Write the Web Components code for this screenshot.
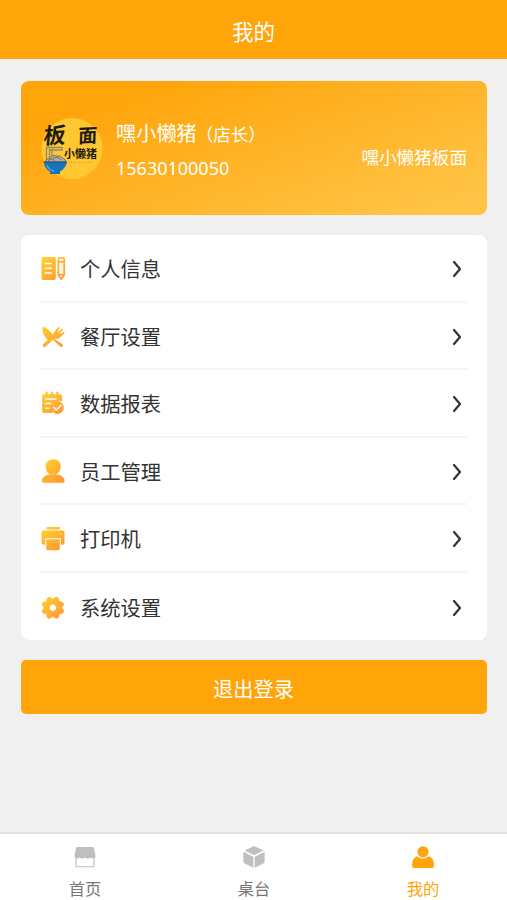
<!DOCTYPE html>
<html lang="zh-CN">
<head>
  <meta charset="UTF-8">
  <meta name="viewport" content="width=device-width, initial-scale=1.0">
  <title>我的</title>
  <style>
    body {
      margin: 0;
      min-height: 100vh;
      display: flex;
      flex-direction: column;
      background: #f0f0f0;
      color: #333;
      font-family: "Noto Sans", "Noto Sans CJK SC", sans-serif;
    }
    main {
      flex: 1;
      display: flex;
      flex-direction: column;
      gap: 20px;
      padding: 22px 20px 0 21px;
    }
  </style>
</head>
<body>
  <page-header>我的</page-header>
  <main>
    <profile-card>
      <shop-logo slot="avatar"></shop-logo>
      <span slot="name">嘿小懒猪</span>
      <span slot="role">（店长）</span>
      <span slot="phone">15630100050</span>
      <span slot="shop">嘿小懒猪板面</span>
    </profile-card>
    <menu-list>
      <menu-item icon="profile">个人信息</menu-item>
      <menu-item icon="dining">餐厅设置</menu-item>
      <menu-item icon="report">数据报表</menu-item>
      <menu-item icon="staff">员工管理</menu-item>
      <menu-item icon="printer">打印机</menu-item>
      <menu-item icon="gear">系统设置</menu-item>
    </menu-list>
    <logout-button>退出登录</logout-button>
  </main>
  <tab-bar>
    <tab-item icon="home">首页</tab-item>
    <tab-item icon="table">桌台</tab-item>
    <tab-item icon="user" active>我的</tab-item>
  </tab-bar>

  <script>
    const icons = {
      profile: `
        <path fill="url(#g)" d="M2.700 0H13q1.800 0 1.800 1.800v19.400q0 1.800-1.800 1.800H2.300Q.5 23 .5 21.200v-3l.5-.9-.5-.9v-3.200l.5-.9-.5-.9V2q0-2 2.200-2z"/>
        <path stroke="#fff" stroke-width="1.500" stroke-linecap="round" d="M4.300 6.500h6M4.300 11.300h6M4.300 16.100h6"/>
        <path fill="#fff3da" stroke="url(#g)" stroke-width="1.700" stroke-linejoin="round" d="M17.300 2.300q0-1.500 1.500-1.500h2.900q1.500 0 1.500 1.500v15.700l-2.950 4.200-2.950-4.200z"/>
        <path fill="none" stroke="#ffa035" stroke-width="1.400" d="M17.500 4.800h5.600M17.500 17.700h5.600"/>`,
      dining: `
        <path fill="url(#g)" d="M1.500 1.500C5 2.300 8.500 5.700 11.500 8.900l3 3.200-.3 2.300 7 4.500q1.600 1.500.2 2.700-1.200 1-2.500-.3L11.700 14.400l-2.900 2.200C4 13.500.8 7.900 1.500 1.500z"/>
        <path fill="none" stroke="url(#g)" stroke-width="3.500" stroke-linecap="round" d="M3.500 20.300 15.300 9.500"/>
        <path fill="url(#g)" d="m12.200 8.500 4.900-6.200q1-.8 1.500.4L16.700 7l.5.4 3.300-3.700q1.200-.6 1.400.6L18.900 8.600l.5.4 3.300-2q1.300.1.600 1.500L18.300 13q-2.300 1.300-4.700-.1-1.800-2-1.400-4.400z"/>`,
      report: `
        <path fill="url(#g)" d="M3 2.200h1.500V.7q0-1.200 1.200-1.200T6.900.7v1.500h2.900V.7q0-1.200 1.200-1.200T12.200.7v1.500h2.900V.7q0-1.200 1.200-1.200T17.500.7v1.500H19q2 0 2 2v5.200q-6-2-9.300 2.100-2.700 4 .3 9.500H3q-2 0-2-2v-2.500l.7-.8-.7-.8v-3l.7-.8-.7-.8V4.200q0-2 2-2z"/>
        <path stroke="#fff" stroke-width="1.500" stroke-linecap="round" d="M5 7h10M5 11.600h4.500M5 16.200h3"/>
        <circle cx="16.300" cy="15.500" r="6.500" fill="url(#g)"/>
        <path fill="none" stroke="#fff" stroke-width="1.500" stroke-linecap="round" stroke-linejoin="round" d="m12.800 15.500 2.500 2.500 4.700-4.700"/>`,
      staff: `
        <path fill="url(#g)" d="M12.200-.7c9.600 0 9.300 12.400 3 15 5.200.8 8.400 3 8.400 6.600q0 1.800-1.800 1.800H2.600Q.8 22.700.8 20.900c0-3.600 3.200-5.800 8.400-6.600C2.900 11.700 2.600-.7 12.200-.7z"/>
        <path stroke="#fff" stroke-opacity=".35" stroke-width=".8" d="M8 14.300h8.400"/>`,
      printer: `
        <rect x="5.300" y="0" width="13.800" height="2.600" rx="1" fill="url(#g)"/>
        <path fill="url(#g)" d="M2.500 3.600h19q2 0 2 2v10.100q0 2-2 2h-1.700v-6.500H4.200v6.500H2.500q-2 0-2-2V5.600q0-2 2-2z"/>
        <rect x="5.200" y="12.200" width="13.600" height="11" rx="1.400" fill="url(#g)"/>
        <path stroke="#fff" stroke-opacity=".8" stroke-width=".9" d="M18.500 7.200h2"/>`,
      gear: `
        <path fill="url(#g)" stroke="url(#g)" stroke-width=".6" stroke-linejoin="round" fill-rule="evenodd" d="m8.500 1 3.300 2 3.500-2 2.200 1 .7 3.500 3.600.8 1 2.200-2 3.200 2 3.300-1 2.300-3.600.8-.7 3.500-2.200 1-3.500-2-3.300 2-2.300-1-.8-3.500-3.500-.8-1-2.300 2-3.300-2-3.200 1-2.200 3.500-.8.8-3.500zM11.800 8.300a3.500 3.500 0 1 0 0 7 3.500 3.500 0 0 0 0-7z"/>`,
      home: `
        <path fill="currentColor" d="M4 1h16q1.500 0 1.800 1.500l1.700 8.200q0 3-2.600 3-1.800 0-2.800-1.200-1 1.200-3 1.200T12 12.500q-1 1.200-3.100 1.200t-3-1.200q-1 1.200-2.800 1.200-2.600 0-2.600-3l1.700-8.200Q2.500 1 4 1z"/>
        <path fill="none" stroke="currentColor" stroke-width="1.200" d="M2.200 13v8.200q0 1.500 1.500 1.500h16.600q1.500 0 1.500-1.500V13"/>`,
      table: `
        <path fill="currentColor" d="M10.700.6q1.300-.6 2.600 0l9 4.200L12 10 1.700 4.800zM.4 6.200l10.900 5.500v12.100l-9.500-4.700Q.4 18.400.4 17zM23.600 6.200l-10.900 5.500v12.100l9.500-4.700q1.400-.7 1.400-2.100z"/>`,
      user: `
        <circle cx="12" cy="6.300" r="6.100" fill="currentColor"/>
        <path fill="currentColor" d="M5.600 11.300q6.400 5 12.800 0Q24 13 24 21.300q0 2.800-3 2.800H3q-3 0-3-2.800 0-8.300 5.600-10z"/>`
    };

    class PageHeader extends HTMLElement {
      connectedCallback() {
        this.attachShadow({ mode: 'open' });
        this.shadowRoot.innerHTML = `
          <style>
            :host {
              display: block;
              height: 59px;
              background: #ffa409;
            }
            h1 {
              margin: 0;
              padding-top: 2px;
              color: #fff;
              font-size: 21.500px;
              font-weight: 400;
              line-height: 60px;
              text-align: center;
            }
          </style>
          <h1><slot></slot></h1>
        `;
      }
    }
    customElements.define('page-header', PageHeader);

    class AppIcon extends HTMLElement {
      connectedCallback() {
        this.attachShadow({ mode: 'open' });
        this.shadowRoot.innerHTML = `
          <style>
            :host {
              display: block;
              width: 24px;
              height: 24px;
            }
            svg {
              display: block;
              width: 100%;
              height: 100%;
              overflow: visible;
            }
          </style>
          <svg viewBox="0 0 24 24" fill="none">
            <defs>
              <linearGradient id="g" gradientUnits="userSpaceOnUse" x1="3" y1="1" x2="21" y2="23">
                <stop offset="0" stop-color="#ffd02f"/>
                <stop offset="1" stop-color="#ff9433"/>
              </linearGradient>
            </defs>
            ${icons[this.getAttribute('name')]}
          </svg>
        `;
      }
    }
    customElements.define('app-icon', AppIcon);

    class ShopLogo extends HTMLElement {
      connectedCallback() {
        this.attachShadow({ mode: 'open' });
        this.shadowRoot.innerHTML = `
          <style>
            :host {
              display: block;
              width: 62px;
              height: 62px;
            }
            svg {
              display: block;
              overflow: visible;
            }
            text {
              font-family: "Noto Sans CJK SC", sans-serif;
              font-weight: 700;
              fill: #211a10;
            }
          </style>
          <svg width="62" height="62" viewBox="0 0 62 62">
            <circle cx="32" cy="31.500" r="30.500" fill="#ffc832"/>
            <path d="M6.500 30v14M9.500 32v11M12 32v10M6 30.500h16v2.500H10" fill="none" stroke="#8f8a70" stroke-width="1.300"/>
            <path d="M5 45q1-4 5-3 2-5 7-3 4-1 5 2 3 0 4 4z" fill="#b4b0a0" stroke="#665f55" stroke-width=".8"/>
            <path d="M8 44q4-4 7 0M13 42q4-4 8 1" fill="none" stroke="#777166"/>
            <path d="M4 45h23q-1 6-7 9.500v2.500H10v-2.500Q4 51 4 45z" fill="#1873bd"/>
            <path d="M3.500 45h23.500" stroke="#35506a" stroke-width="1.200"/>
            <path d="M7 48.500q2 4.500 7 5.500" fill="none" stroke="#64aee0" stroke-width="1.300"/>
            <text font-size="22" transform="translate(3 27) rotate(-3) skewX(-8)">板</text>
            <text font-size="19" transform="translate(38 26) rotate(-3) skewX(-5)">面</text>
            <text x="24" y="41" font-size="11">小懒猪</text>
            <path d="M29 45.500h24" stroke="#e0ae2d" stroke-width="1" stroke-dasharray="3 1.500"/>
          </svg>
        `;
      }
    }
    customElements.define('shop-logo', ShopLogo);

    class ProfileCard extends HTMLElement {
      connectedCallback() {
        this.attachShadow({ mode: 'open' });
        this.shadowRoot.innerHTML = `
          <style>
            :host {
              display: flex;
              align-items: center;
              box-sizing: border-box;
              height: 134px;
              padding: 0 20px 0 19px;
              border-radius: 8px;
              background: linear-gradient(160deg, #ffa409 15%, #ffc548 95%);
              color: #fff;
            }
            .info {
              flex: 1;
              margin-left: 14px;
              padding-top: 4px;
            }
            .name {
              display: flex;
              align-items: baseline;
              font-size: 20.200px;
              line-height: 34px;
            }
            .role {
              margin-left: -1px;
              font-size: 17.500px;
            }
            .phone {
              font-size: 18px;
              line-height: 34px;
            }
            .shop {
              padding-top: 16px;
              font-size: 17.600px;
            }
          </style>
          <slot name="avatar"></slot>
          <div class="info">
            <div class="name">
              <slot name="name"></slot>
              <div class="role"><slot name="role"></slot></div>
            </div>
            <div class="phone"><slot name="phone"></slot></div>
          </div>
          <div class="shop"><slot name="shop"></slot></div>
        `;
      }
    }
    customElements.define('profile-card', ProfileCard);

    class MenuList extends HTMLElement {
      connectedCallback() {
        this.attachShadow({ mode: 'open' });
        this.shadowRoot.innerHTML = `
          <style>
            :host {
              display: grid;
              grid-template-rows: repeat(6, 1fr);
              box-sizing: border-box;
              height: 405px;
              padding: 0 20px 0 19px;
              border-radius: 8px;
              background: #fff;
            }
            ::slotted(:not(:last-child)) {
              border-bottom: 2px solid #f5f5f5;
            }
          </style>
          <slot></slot>
        `;
      }
    }
    customElements.define('menu-list', MenuList);

    class MenuItem extends HTMLElement {
      connectedCallback() {
        this.attachShadow({ mode: 'open' });
        this.shadowRoot.innerHTML = `
          <style>
            :host {
              display: flex;
              align-items: center;
              box-sizing: border-box;
              padding-top: 3px;
              font-size: 20.300px;
            }
            app-icon {
              margin-left: 1px;
            }
            .label {
              flex: 1;
              margin-left: 15px;
              line-height: 30px;
            }
            .arrow {
              margin-right: 4px;
            }
          </style>
          <app-icon name="${this.getAttribute('icon')}"></app-icon>
          <div class="label"><slot></slot></div>
          <svg class="arrow" width="12" height="18" viewBox="0 0 12 18" fill="none">
            <path d="m3 2 6 7-6 7" stroke="#333" stroke-width="2.200" stroke-linecap="round" stroke-linejoin="round"/>
          </svg>
        `;
      }
    }
    customElements.define('menu-item', MenuItem);

    class LogoutButton extends HTMLElement {
      connectedCallback() {
        this.attachShadow({ mode: 'open' });
        this.shadowRoot.innerHTML = `
          <style>
            :host {
              display: block;
            }
            button {
              display: block;
              width: 100%;
              height: 54px;
              padding: 2px 1px 0 0;
              border: 0;
              border-radius: 5px;
              background: #ffa409;
              color: #fff;
              font-family: inherit;
              font-size: 20.300px;
            }
          </style>
          <button type="button"><slot></slot></button>
        `;
      }
    }
    customElements.define('logout-button', LogoutButton);

    class TabBar extends HTMLElement {
      connectedCallback() {
        this.attachShadow({ mode: 'open' });
        this.shadowRoot.innerHTML = `
          <style>
            :host {
              display: grid;
              grid-template-columns: repeat(3, 1fr);
              box-sizing: border-box;
              height: 68px;
              border-top: 2px solid #e0e0e0;
              background: #fff;
            }
          </style>
          <slot></slot>
        `;
      }
    }
    customElements.define('tab-bar', TabBar);

    class TabItem extends HTMLElement {
      connectedCallback() {
        this.attachShadow({ mode: 'open' });
        this.shadowRoot.innerHTML = `
          <style>
            :host {
              display: flex;
              flex-direction: column;
              align-items: center;
              gap: 9px;
              padding: 12px 0 0 1px;
              color: #777;
              font-size: 16.300px;
              line-height: 24px;
            }
            app-icon {
              width: 22px;
              height: 22px;
              color: #bfbfbf;
            }
            :host([active]),
            :host([active]) app-icon {
              color: #ffa409;
            }
          </style>
          <app-icon name="${this.getAttribute('icon')}"></app-icon>
          <div><slot></slot></div>
        `;
      }
    }
    customElements.define('tab-item', TabItem);
  </script>
</body>
</html>
